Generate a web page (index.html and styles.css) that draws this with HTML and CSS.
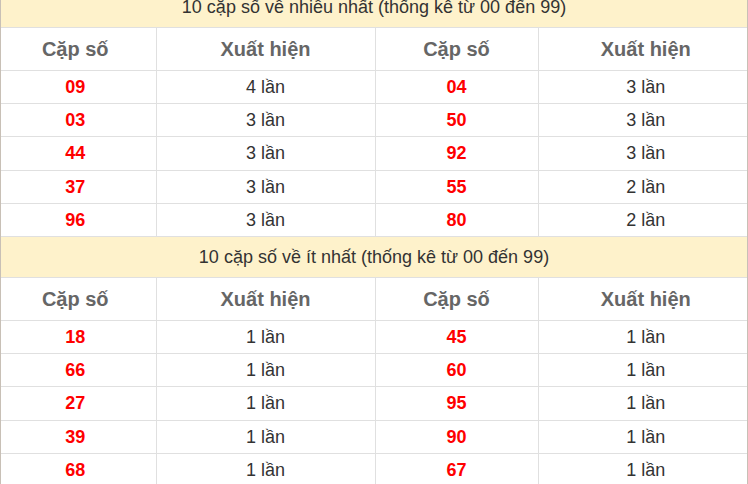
FILE: index.html
```html
<!DOCTYPE html>
<html>
<head>
<meta charset="utf-8">
<link rel="stylesheet" href="styles.css">
</head>
<body>
<div class="wrap">
<table class="stat">
<colgroup><col class="c1"><col class="c2"><col class="c3"><col class="c4"></colgroup>
<tr class="title"><td colspan="4">10 cặp số về nhiều nhất (thống kê từ 00 đến 99)</td></tr>
<tr class="head"><th>Cặp số</th><th>Xuất hiện</th><th>Cặp số</th><th>Xuất hiện</th></tr>
<tr><td class="num">09</td><td>4 lần</td><td class="num">04</td><td>3 lần</td></tr>
<tr><td class="num">03</td><td>3 lần</td><td class="num">50</td><td>3 lần</td></tr>
<tr><td class="num">44</td><td>3 lần</td><td class="num">92</td><td>3 lần</td></tr>
<tr><td class="num">37</td><td>3 lần</td><td class="num">55</td><td>2 lần</td></tr>
<tr><td class="num">96</td><td>3 lần</td><td class="num">80</td><td>2 lần</td></tr>
<tr class="title"><td colspan="4">10 cặp số về ít nhất (thống kê từ 00 đến 99)</td></tr>
<tr class="head"><th>Cặp số</th><th>Xuất hiện</th><th>Cặp số</th><th>Xuất hiện</th></tr>
<tr><td class="num">18</td><td>1 lần</td><td class="num">45</td><td>1 lần</td></tr>
<tr><td class="num">66</td><td>1 lần</td><td class="num">60</td><td>1 lần</td></tr>
<tr><td class="num">27</td><td>1 lần</td><td class="num">95</td><td>1 lần</td></tr>
<tr><td class="num">39</td><td>1 lần</td><td class="num">90</td><td>1 lần</td></tr>
<tr><td class="num">68</td><td>1 lần</td><td class="num">67</td><td>1 lần</td></tr>
</table>
</div>
</body>
</html>
```
FILE: styles.css
```css
html, body {
  margin: 0;
  padding: 0;
  background: #fff;
}
.wrap {
  margin-top: -14px;
  width: 748px;
  box-sizing: border-box;
  border-left: 1px solid #c8c0b6;
  border-right: 1px solid #c8c0b6;
}
.stat {
  width: 100%;
  border-collapse: collapse;
  table-layout: fixed;
  font-family: "Liberation Sans", Arial, sans-serif;
  color: #333;
}
.c1 { width: 155px; }
.c2 { width: 219px; }
.c3 { width: 163px; }
.c4 { width: 209px; }
.stat td, .stat th {
  border: 1px solid #e0e0e0;
  text-align: center;
  padding: 0;
  line-height: 20px;
}
.stat tr > :first-child { border-left: none; padding-right: 6px; }
.stat tr > :last-child { border-right: none; padding-left: 6px; }
.stat tr.title > td { padding: 0; }
.stat td {
  height: 32.2px;
  font-size: 18px;
}
.title td {
  height: 40px;
  background: #fef2cb;
  font-size: 18px;
  color: #333;
}
.head th {
  height: 42px;
  font-size: 20px;
  font-weight: bold;
  color: #666;
}
.stat td.num {
  color: #f00;
  font-weight: bold;
}
```
